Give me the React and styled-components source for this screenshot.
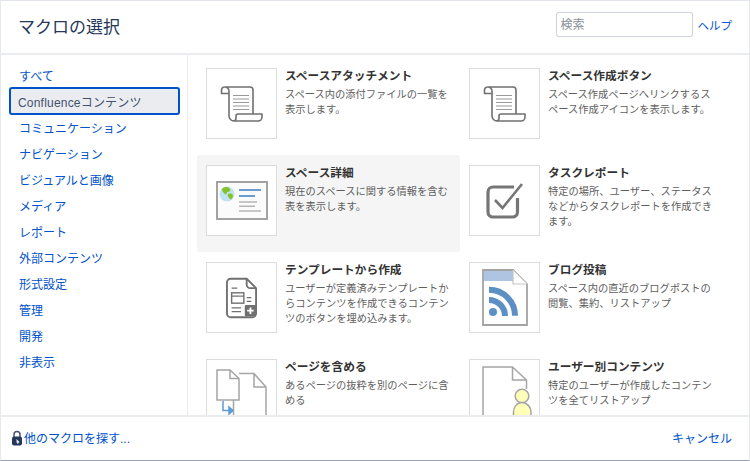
import React from "react";
import styled, { createGlobalStyle } from "styled-components";

const Global = createGlobalStyle`
  html, body { margin: 0; padding: 0; background: #fff; }
  body { font-family: "Liberation Sans", "Noto Sans CJK JP", sans-serif; }
`;
const Dialog = styled.div`
  width: 750px; height: 461px; box-sizing: border-box; display: flex; flex-direction: column;
  border-top: 1px solid #e3e5ec; border-left: 1px solid #e6e8ee; border-right: 1px solid #e6e8ee;
  border-bottom: 1px solid #98a1b5; overflow: hidden; background: #fff;
`;
const Header = styled.header`
  height: 54px; flex: none; box-sizing: border-box; display: flex; align-items: center;
  padding: 0 17px 0 17px; border-bottom: 2px solid #ebecf0;
`;
const Title = styled.h1`
  margin: 0 0 3px; flex: 1; font-size: 17px; font-weight: 400; color: #253858;
`;
const Tools = styled.div`
  display: flex; align-items: center; gap: 5px; margin-bottom: 5px;
`;
const Search = styled.input`
  width: 137px; height: 25px; box-sizing: border-box; border: 1px solid #d0d4dc; border-radius: 3px;
  padding: 0 4px; font: 12px "Liberation Sans", "Noto Sans CJK JP", sans-serif; outline: none;
  box-shadow: 0 0 1px #dfe1e6;
  &::placeholder { color: #8a8f99; opacity: 1; }
`;
const Link = styled.a`
  color: #0052cc; font-size: ${p => p.$size || 12}px; text-decoration: none; white-space: nowrap;
`;
const Body = styled.div`
  flex: 1; min-height: 0; display: flex;
`;
const Side = styled.nav`
  width: 187px; flex: none; box-sizing: border-box; border-right: 1px solid #ebecf0;
  padding: 7px 7px 0 8px; display: flex; flex-direction: column;
`;
const NavItem = styled.div`
  height: 26px; box-sizing: border-box; display: flex; align-items: center; padding-left: 10px;
  font-size: 12px;
  color: ${p => (p.$active ? "#42526e" : "#0052cc")};
  ${p => p.$active && "background:#ebecf0;border:2px solid #0052cc;border-radius:3px;height:28px;margin:-1px 0;padding-left:7px;letter-spacing:.2px;"}
`;
const Main = styled.main`
  flex: 1; min-width: 0; overflow: hidden; padding: 3px 0 0 9px;
  display: grid; grid-template-columns: 263px 263px; grid-auto-rows: 97px; align-content: start;
`;
const Card = styled.article`
  display: flex; gap: 8px; box-sizing: border-box; padding: 10px 6px 0 9px; border-radius: 3px;
  background: ${p => (p.$hover ? "#f5f5f5" : "transparent")};
`;
const Thumb = styled.div`
  width: 71px; height: 71px; flex: none; box-sizing: border-box; background: #fff; border: 1px solid #dcdcdc;
  display: flex; align-items: center; justify-content: center; overflow: hidden;
`;
const Info = styled.div`
  width: 168px; flex: none;
`;
const CardTitle = styled.h2`
  margin: 0 0 3px; font-size: 11.7px; line-height: 16px; font-weight: 700; color: #333;
`;
const Desc = styled.p`
  margin: 0; font-size: 10.25px; line-height: 15px; color: #5e5e5e; word-break: break-all;
`;
const Footer = styled.footer`
  height: 45px; flex: none; box-sizing: border-box; display: flex; align-items: center; justify-content: space-between;
  padding: 0 17px 2px 9px; border-top: 2px solid #ebecf0;
`;
const FooterLeft = styled.div`
  display: flex; align-items: center; gap: 0;
`;

const Scroll = () => (
  <svg width="43" height="36" viewBox="0 0 43 36" fill="none" stroke="#707070" strokeWidth="1.600" strokeLinejoin="round">
    <path d="M9 7.500H1.500V4a3 3 0 0 1 3-3H30a3 3 0 0 1 3 3v24M4.500 1a4 4 0 0 1 4.500 3.500V30a5 5 0 0 0 5 5h24a4 4 0 0 0 4-4v-3H18a2 2 0 0 0-2 2v2a3 3 0 0 1-3 3" />
    <path d="M13 9.500h16M13 13h16M13 16.500h16M13 20h16M13 23.500h16" stroke="#9a9a9a" strokeWidth="1.100" />
  </svg>
);
const SpaceDetail = () => (
  <svg width="52" height="39" viewBox="0 0 52 39">
    <rect x="1" y="1" width="50" height="37" fill="#fbfbfb" stroke="#999" strokeWidth="1.800" />
    <circle cx="11" cy="13" r="7.500" fill="#bfe3f5" />
    <path d="M6 8c3-3 7-2 8 0s-1 3-3 3c0 2-1 3-2 2S6 11 6 8zM12 13c3-1 5 0 5 2s-2 4-3 3-3-3-2-5z" fill="#86c226" />
    <path d="M23 9h22M23 15h16" stroke="#6b9bd1" strokeWidth="1.800" />
    <path d="M23 21h18M23 25.300h16M23 30h22" stroke="#b5b5b5" strokeWidth="1.400" />
  </svg>
);
const Template = () => (
  <svg width="31" height="42" viewBox="0 0 33 43" fill="none" stroke="#707070" strokeWidth="2">
    <path d="M22 1H5a4 4 0 0 0-4 4v33a4 4 0 0 0 4 4h23a4 4 0 0 0 4-4V11z" strokeLinejoin="round" />
    <path d="M22 1v6a4 4 0 0 0 4 4h6" />
    <path d="M6 11h6M22 21h5M22 25h5M6 32h10M6 36h10" strokeWidth="1.300" />
    <rect x="6" y="16" width="13" height="11" strokeWidth="1.500" />
    <path d="M6 19.500h13" strokeWidth="1.300" />
    <rect x="20" y="29" width="12" height="12" rx="1.500" fill="#707070" stroke="none" />
    <path d="M26 31.500v7M22.500 35h7" stroke="#fff" strokeWidth="2" />
  </svg>
);
const Task = () => (
  <svg width="38" height="36" viewBox="0 0 38 36" fill="none" stroke="#767676">
    <path d="M31.500 15v14a5 5 0 0 1-5 5H7a5 5 0 0 1-5-5V9a5 5 0 0 1 5-5h21" strokeWidth="3.200" />
    <path d="M9 17l7.500 8L36 1" strokeWidth="2.600" />
  </svg>
);
const Blog = () => (
  <svg width="46" height="57" viewBox="0 0 46 57">
    <path d="M1 1h30l14 14v41H1z" fill="#fff" stroke="#a3a3a3" strokeWidth="1.800" />
    <path d="M2 2h29v10H2z" fill="#afc3e2" />
    <path d="M31 1v14h14" fill="#fff" stroke="#c4c4c4" strokeWidth="1.200" />
    <circle cx="11" cy="43" r="4" fill="#5c90c4" />
    <path d="M7 20.700A26 26 0 0 1 33 46.700M7 31A16 16 0 0 1 23 47" fill="none" stroke="#5c90c4" strokeWidth="6" />
  </svg>
);
const Include = () => (
  <svg width="51" height="60" viewBox="0 0 51 60" style={{ alignSelf: "flex-start", marginTop: 9 }} fill="none" stroke="#a5a5a5" strokeWidth="1.500">
    <path d="M23 4.500h15l12 13.500v42M38 4.500V18h12M17.500 31v29" />
    <path d="M1 1h13l9 8.500V31H1z" fill="#fff" />
    <path d="M14 1v8.500h9" />
    <path d="M7 32v9.500h6" stroke="#5c9bd8" />
    <path d="M13 38l4 3.500-4 3.500z" fill="#5c9bd8" stroke="#5c9bd8" />
  </svg>
);
const UserContent = () => (
  <svg width="56" height="60" viewBox="0 0 56 60" style={{ alignSelf: "flex-start", marginTop: 6 }} fill="none" stroke="#a5a5a5" strokeWidth="1.500">
    <path d="M6 60V1h29.500L49.500 14v9M35.500 1v13h14" />
    <circle cx="45" cy="30" r="6.800" fill="#ffffb8" />
    <path d="M36.500 60V46c0-5 3.500-9.500 8.500-9.500s9 4.500 9 9.500v14z" fill="#ffffb8" />
  </svg>
);
const Lock = () => (
  <svg width="14" height="16" viewBox="0 0 14 16">
    <path d="M4 7V4.500a3 3 0 0 1 6 0V7" fill="none" stroke="#44546f" strokeWidth="1.500" />
    <rect x="2" y="6.500" width="10" height="9" rx="2" fill="#253858" />
    <path d="M6.500 9l3 3-2 2-1-2z" fill="#dfe8f5" />
  </svg>
);

const nav = ["すべて", "Confluenceコンテンツ", "コミュニケーション", "ナビゲーション", "ビジュアルと画像", "メディア", "レポート", "外部コンテンツ", "形式設定", "管理", "開発", "非表示"];
const cards = [
  { t: "スペースアタッチメント", d: "スペース内の添付ファイルの一覧を表示します。", i: <Scroll /> },
  { t: "スペース作成ボタン", d: "スペース作成ページへリンクするスペース作成アイコンを表示します。", i: <Scroll /> },
  { t: "スペース詳細", d: "現在のスペースに関する情報を含む表を表示します。", i: <SpaceDetail />, h: true },
  { t: "タスクレポート", d: "特定の場所、ユーザー、ステータスなどからタスクレポートを作成できます。", i: <Task /> },
  { t: "テンプレートから作成", d: "ユーザーが定義済みテンプレートからコンテンツを作成できるコンテンツのボタンを埋め込みます。", i: <Template /> },
  { t: "ブログ投稿", d: "スペース内の直近のブログポストの閲覧、集約、リストアップ", i: <Blog /> },
  { t: "ページを含める", d: "あるページの抜粋を別のページに含める", i: <Include /> },
  { t: "ユーザー別コンテンツ", d: "特定のユーザーが作成したコンテンツを全てリストアップ", i: <UserContent /> },
];

export default function App() {
  return (
    <Dialog>
      <Global />
      <Header>
        <Title>マクロの選択</Title>
        <Tools>
          <Search placeholder="検索" />
          <Link $size={11.5}>ヘルプ</Link>
        </Tools>
      </Header>
      <Body>
        <Side>
          {nav.map((n, i) => <NavItem key={n} $active={i === 1}>{n}</NavItem>)}
        </Side>
        <Main>
          {cards.map(c => (
            <Card key={c.t} $hover={c.h}>
              <Thumb>{c.i}</Thumb>
              <Info>
                <CardTitle>{c.t}</CardTitle>
                <Desc>{c.d}</Desc>
              </Info>
            </Card>
          ))}
        </Main>
      </Body>
      <Footer>
        <FooterLeft><Lock /><Link>他のマクロを探す...</Link></FooterLeft>
        <Link>キャンセル</Link>
      </Footer>
    </Dialog>
  );
}
